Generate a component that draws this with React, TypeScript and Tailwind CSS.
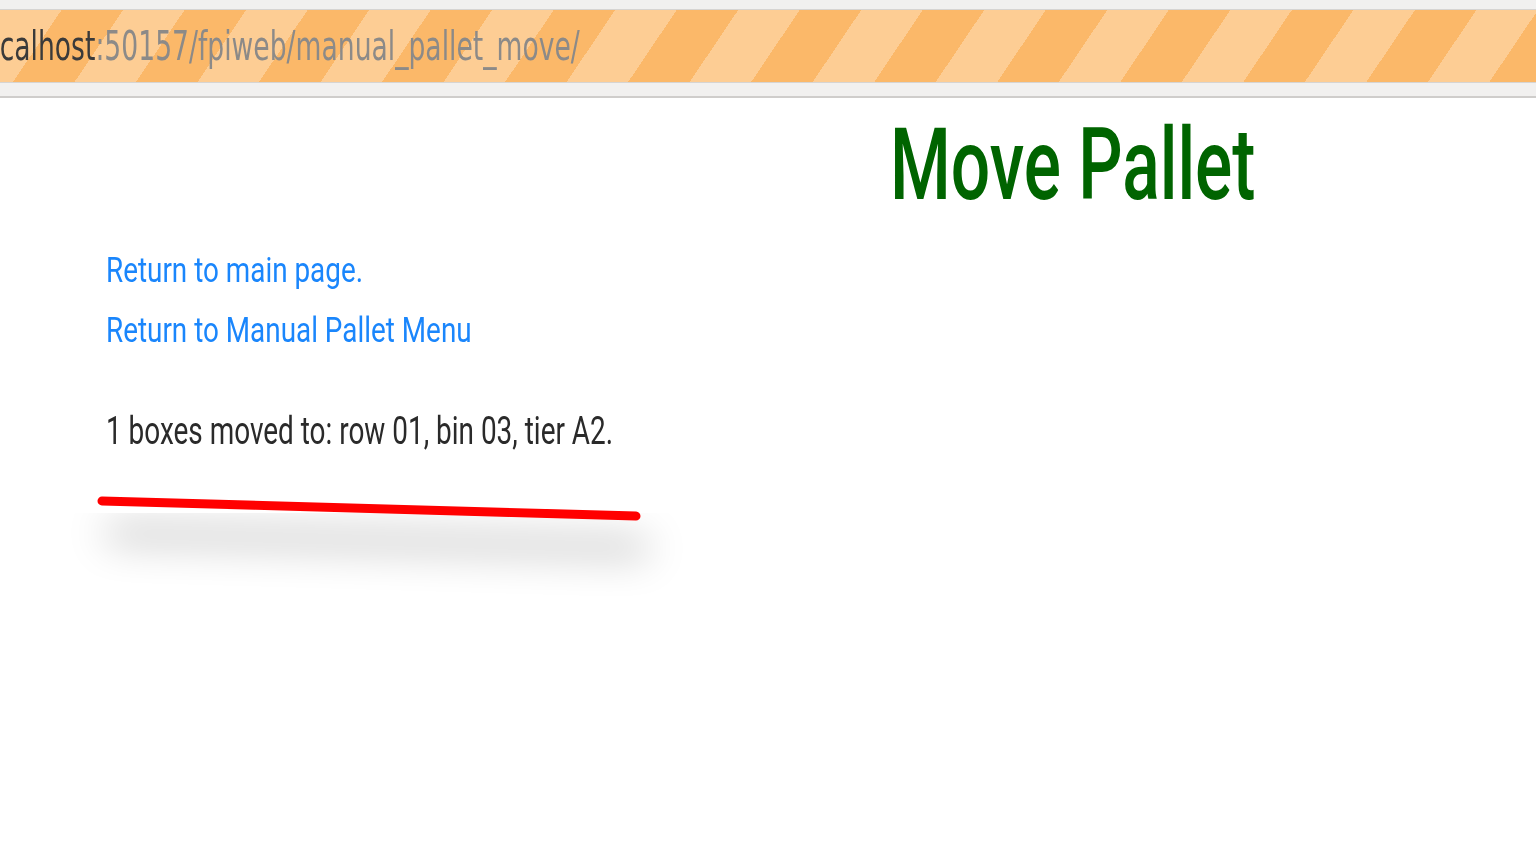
export default function App() {
  return (
    <div className="min-h-screen w-full bg-white overflow-hidden font-['Roboto',sans-serif]">
      {/* browser url strip */}
      <div className="h-[10px] bg-[#f1f0ef] border-b border-[#d6d4d2]" />
      <div className="h-[72px] overflow-hidden bg-[repeating-linear-gradient(124deg,#fdcd94_0px,#fdcd94_51px,#fbb869_51px,#fbb869_102px)] flex items-center">
        <div className="ml-[-24px] whitespace-nowrap inline-block origin-left scale-x-[0.665] font-['DejaVu_Sans',sans-serif] text-[40px] leading-none">
          <span className="text-[#3a3a3a]">localhost</span>
          <span className="text-[#8c8a88]">:50157/fpiweb/manual_pallet_move/</span>
        </div>
      </div>
      <div className="h-[14px] bg-[#f1f0ef] border-t border-[#d6d4d2]" />
      <div className="h-[2px] bg-[#cfcdcb]" />

      <main>
        <h1 className="mt-[17px] ml-[890px] text-[100px] leading-[100px] font-medium text-[#006400] whitespace-nowrap">
          <span className="inline-block origin-left scale-x-[0.695]">Move Pallet</span>
        </h1>

        <div className="mt-[26px] ml-[106px] flex flex-col">
          <a href="#" className="text-[35px] leading-[60px] text-[#1a86fc] whitespace-nowrap">
            <span className="inline-block origin-left scale-x-[0.796]">Return to main page.</span>
          </a>
          <a href="#" className="text-[35px] leading-[60px] text-[#1a86fc] whitespace-nowrap">
            <span className="inline-block origin-left scale-x-[0.796]">Return to Manual Pallet Menu</span>
          </a>
          <p className="mt-[40px] text-[38px] leading-[60px] text-[#2a2a2a] whitespace-nowrap">
            <span className="inline-block origin-left scale-x-[0.735]">1 boxes moved to: row 01, bin 03, tier A2.</span>
          </p>
        </div>

        {/* red annotation stroke */}
        <div className="mt-[20px] ml-[30px]">
          <svg width="720" height="150" viewBox="0 0 720 150">
            <defs>
              <filter id="sh" filterUnits="userSpaceOnUse" x="0" y="0" width="720" height="150">
                <feGaussianBlur in="SourceAlpha" stdDeviation="20" />
                <feOffset dx="8" dy="32" result="b" />
                <feComponentTransfer>
                  <feFuncA type="linear" slope="0.5" />
                </feComponentTransfer>
                <feMerge>
                  <feMergeNode />
                  <feMergeNode in="SourceGraphic" />
                </feMerge>
              </filter>
            </defs>
            <line x1="72" y1="20" x2="606" y2="35" stroke="#ff0000" strokeWidth="9" strokeLinecap="round" filter="url(#sh)" />
          </svg>
        </div>
      </main>
    </div>
  );
}
